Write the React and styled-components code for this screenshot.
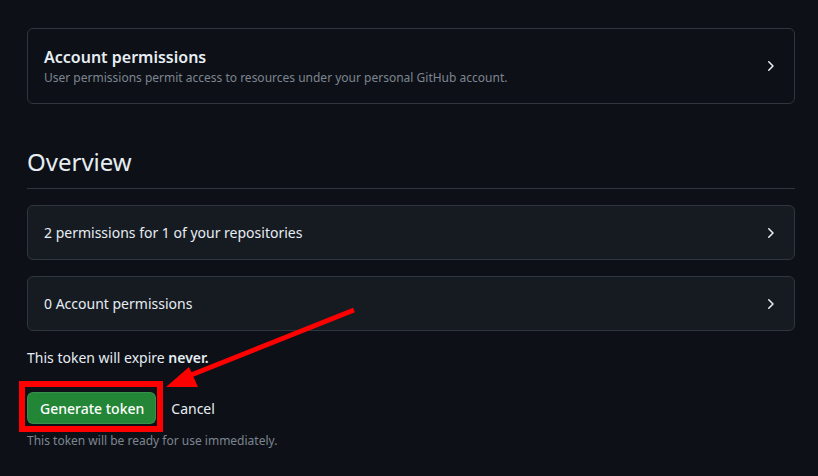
import React from 'react';
import styled, { createGlobalStyle } from 'styled-components';

const GlobalStyle = createGlobalStyle`
  html, body {
    margin: 0;
    padding: 0;
    background: #0d1117;
  }
  body {
    font-family: "Noto Sans", "Liberation Sans", sans-serif;
    color: #e6edf3;
    font-size: 14px;
    line-height: 1.5;
  }
`;

const ChevronRight = () => (
  <svg width="16" height="16" viewBox="0 0 16 16" fill="#e6edf3">
    <path d="M6.22 3.22a.749.749 0 0 1 1.06 0l4.25 4.25a.749.749 0 0 1 0 1.06l-4.25 4.25a.749.749 0 0 1-1.042-.018.749.749 0 0 1-.018-1.042L9.94 8 6.22 4.28a.749.749 0 0 1 0-1.06Z" />
  </svg>
);

const App = () => {
  return (
    <>
      <GlobalStyle />
      <Page>
        <Card>
          <div>
            <CardTitle>Account permissions</CardTitle>
            <CardNote>
              User permissions permit access to resources under your personal GitHub account.
            </CardNote>
          </div>
          <ChevronRight />
        </Card>

        <Subhead>Overview</Subhead>

        <Card filled>
          <span>2 permissions for 1 of your repositories</span>
          <ChevronRight />
        </Card>
        <Card filled>
          <span>0 Account permissions</span>
          <ChevronRight />
        </Card>

        <Expiry>
          This token will expire <strong>never.</strong>
        </Expiry>

        <Actions>
          <PrimaryButton>
            Generate token
            <Highlight />
          </PrimaryButton>
          <LinkButton>Cancel</LinkButton>
        </Actions>
        <Hint>This token will be ready for use immediately.</Hint>

        <Arrow width="818" height="476" viewBox="0 0 818 476">
          <line x1="354" y1="310" x2="186" y2="377" stroke="#ff0000" strokeWidth="5" />
          <polygon points="166,387 189,367 198,387" fill="#ff0000" />
        </Arrow>
      </Page>
    </>
  );
};

const Page = styled.div`
  position: relative;
  width: 818px;
  height: 476px;
  box-sizing: border-box;
  padding: 28px 23px 0 27px;
  overflow: hidden;
`;

const Card = styled.div`
  display: flex;
  align-items: center;
  justify-content: space-between;
  padding: 16px;
  margin-bottom: 16px;
  border: 1px solid #30363d;
  border-radius: 6px;
  background: ${(p) => (p.filled ? '#161b22' : 'transparent')};
  line-height: 21px;

  svg {
    flex-shrink: 0;
  }
`;

const CardTitle = styled.div`
  font-size: 16px;
  font-weight: 600;
  line-height: 24px;
`;

const CardNote = styled.div`
  font-size: 12px;
  line-height: 18px;
  color: #7d8590;
`;

const Subhead = styled.h2`
  margin: 40px 0 16px;
  padding-bottom: 8px;
  font-size: 24px;
  font-weight: 400;
  line-height: 36px;
  border-bottom: 1px solid #30363d;
`;

const Expiry = styled.p`
  margin: 0 0 24px;
  line-height: 21px;

  strong {
    font-weight: 600;
  }
`;

const Actions = styled.div`
  display: flex;
  align-items: center;
  gap: 15px;
`;

const PrimaryButton = styled.button`
  position: relative;
  height: 32px;
  padding: 0 11px 0 12px;
  font-family: inherit;
  font-size: 14px;
  font-weight: 500;
  color: #ffffff;
  background: #238636;
  border: 1px solid rgba(240, 246, 252, 0.1);
  border-radius: 6px;
`;

const Highlight = styled.span`
  position: absolute;
  left: -9px;
  top: -12px;
  right: -8px;
  bottom: -9px;
  border: 6px solid #ff0000;
  pointer-events: none;
`;

const LinkButton = styled.span`
  font-size: 14px;
  color: #e6edf3;
`;

const Hint = styled.p`
  margin: 8px 0 0;
  font-size: 12px;
  line-height: 18px;
  color: #7d8590;
`;

const Arrow = styled.svg`
  position: absolute;
  left: 0;
  top: 0;
  pointer-events: none;
`;

export default App;
